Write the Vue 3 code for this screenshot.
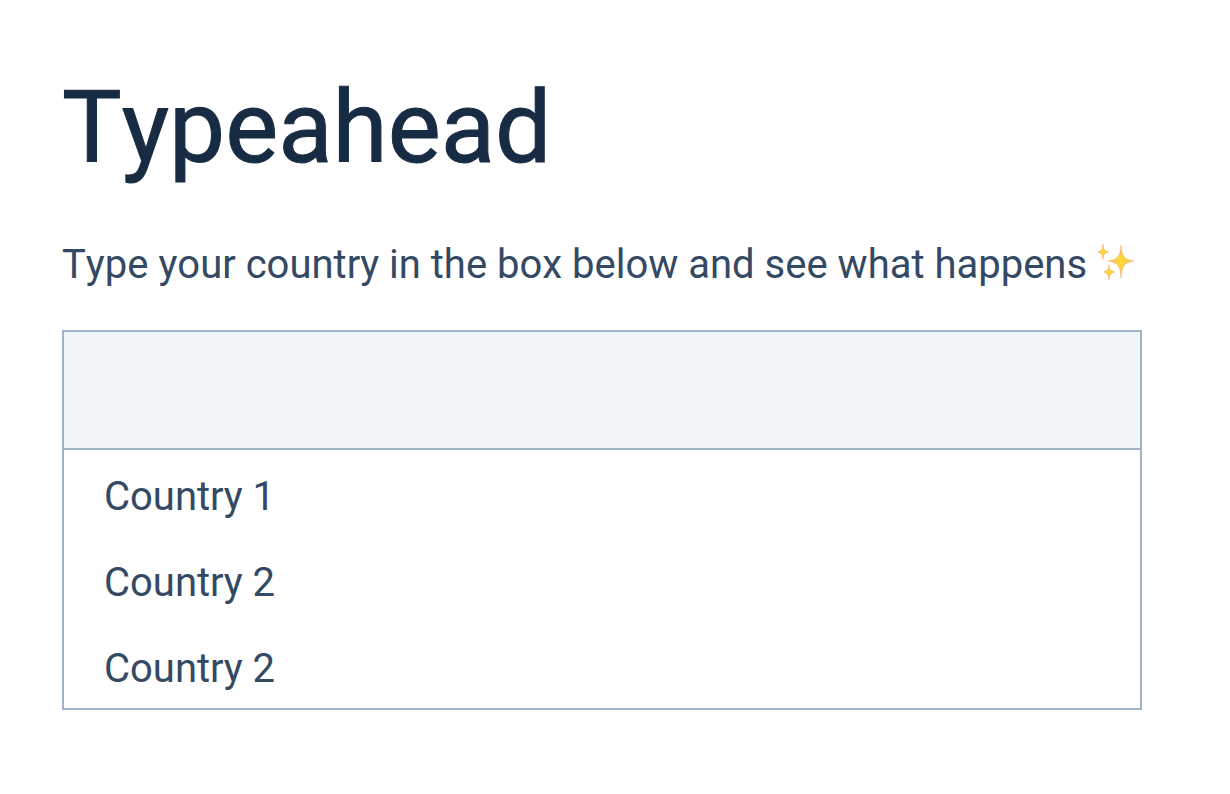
<script setup>
import { ref } from 'vue'

const query = ref('')
const options = ref([
  { id: 1, name: 'Country 1' },
  { id: 2, name: 'Country 2' },
  { id: 3, name: 'Country 2' },
])
</script>

<template>
  <main class="page">
    <h1 class="title">Typeahead</h1>
    <label class="lead" for="country">
      Type your country in the box below and see what happens
      <svg class="sparkles" viewBox="0 0 36 36" aria-hidden="true">
        <defs>
          <radialGradient id="glow">
            <stop offset="0" stop-color="#fee03a" />
            <stop offset="0.35" stop-color="#fdd23e" />
            <stop offset="1" stop-color="#f3a765" />
          </radialGradient>
        </defs>
        <g fill="url(#glow)" stroke="#f6ab55" stroke-width="0.5" stroke-linejoin="bevel">
          <path d="M23 1C23.500 12 26.500 16 36 17C26.500 18 23.500 22 23 34C22.500 22 19.500 18 10 17C19.500 16 22.500 12 23 1Z" />
          <path d="M5 0C5.300 5 6.500 7 10.500 8C6.500 9 5.300 11 5 15.500C4.700 11 3.500 9 0 8C3.500 7 4.700 5 5 0Z" />
          <path d="M11 20.500C11.300 25.500 12.500 27 16.500 28C12.500 29 11.300 31 11 36C10.700 31 9.500 29 5.500 28C9.500 27 10.700 25.500 11 20.500Z" />
        </g>
      </svg>
    </label>
    <div class="typeahead">
      <input id="country" v-model="query" class="field" type="text" autocomplete="off" />
      <ul class="options">
        <li v-for="option in options" :key="option.id">
          <button class="option" type="button" @click="query = option.name">{{ option.name }}</button>
        </li>
      </ul>
    </div>
  </main>
</template>

<style>
body {
  background: #fff;
}
</style>

<style scoped>
.page {
  padding: 64px 88px 64px 62px;
  font-family: Roboto, sans-serif;
  font-kerning: none;
  color: #344963;
}
.title {
  margin: 0 0 46px;
  font-size: 100px;
  font-weight: 400;
  line-height: 128px;
  color: #172b43;
  -webkit-text-stroke: 1px currentColor;
}
.lead {
  display: block;
  margin-bottom: 38px;
  font-size: 40px;
  line-height: 54px;
  white-space: nowrap;
}
.sparkles {
  width: 36px;
  height: 36px;
  margin-left: 1px;
  vertical-align: -2px;
}
.typeahead {
  border: 2px solid #a0b2c8;
}
.field {
  display: block;
  box-sizing: border-box;
  width: 100%;
  height: 118px;
  padding: 0 40px;
  border: 0;
  border-bottom: 2px solid #a0b2c8;
  outline: 0;
  background: #f0f3f8;
  font: inherit;
  font-size: 40px;
  color: inherit;
}
.options {
  display: grid;
  gap: 10px;
  margin: 0;
  padding: 8px 0 2px;
  list-style: none;
}
.option {
  display: block;
  width: 100%;
  height: 76px;
  padding: 0 40px;
  border: 0;
  background: none;
  font: inherit;
  font-size: 40px;
  color: inherit;
  text-align: left;
}
</style>
